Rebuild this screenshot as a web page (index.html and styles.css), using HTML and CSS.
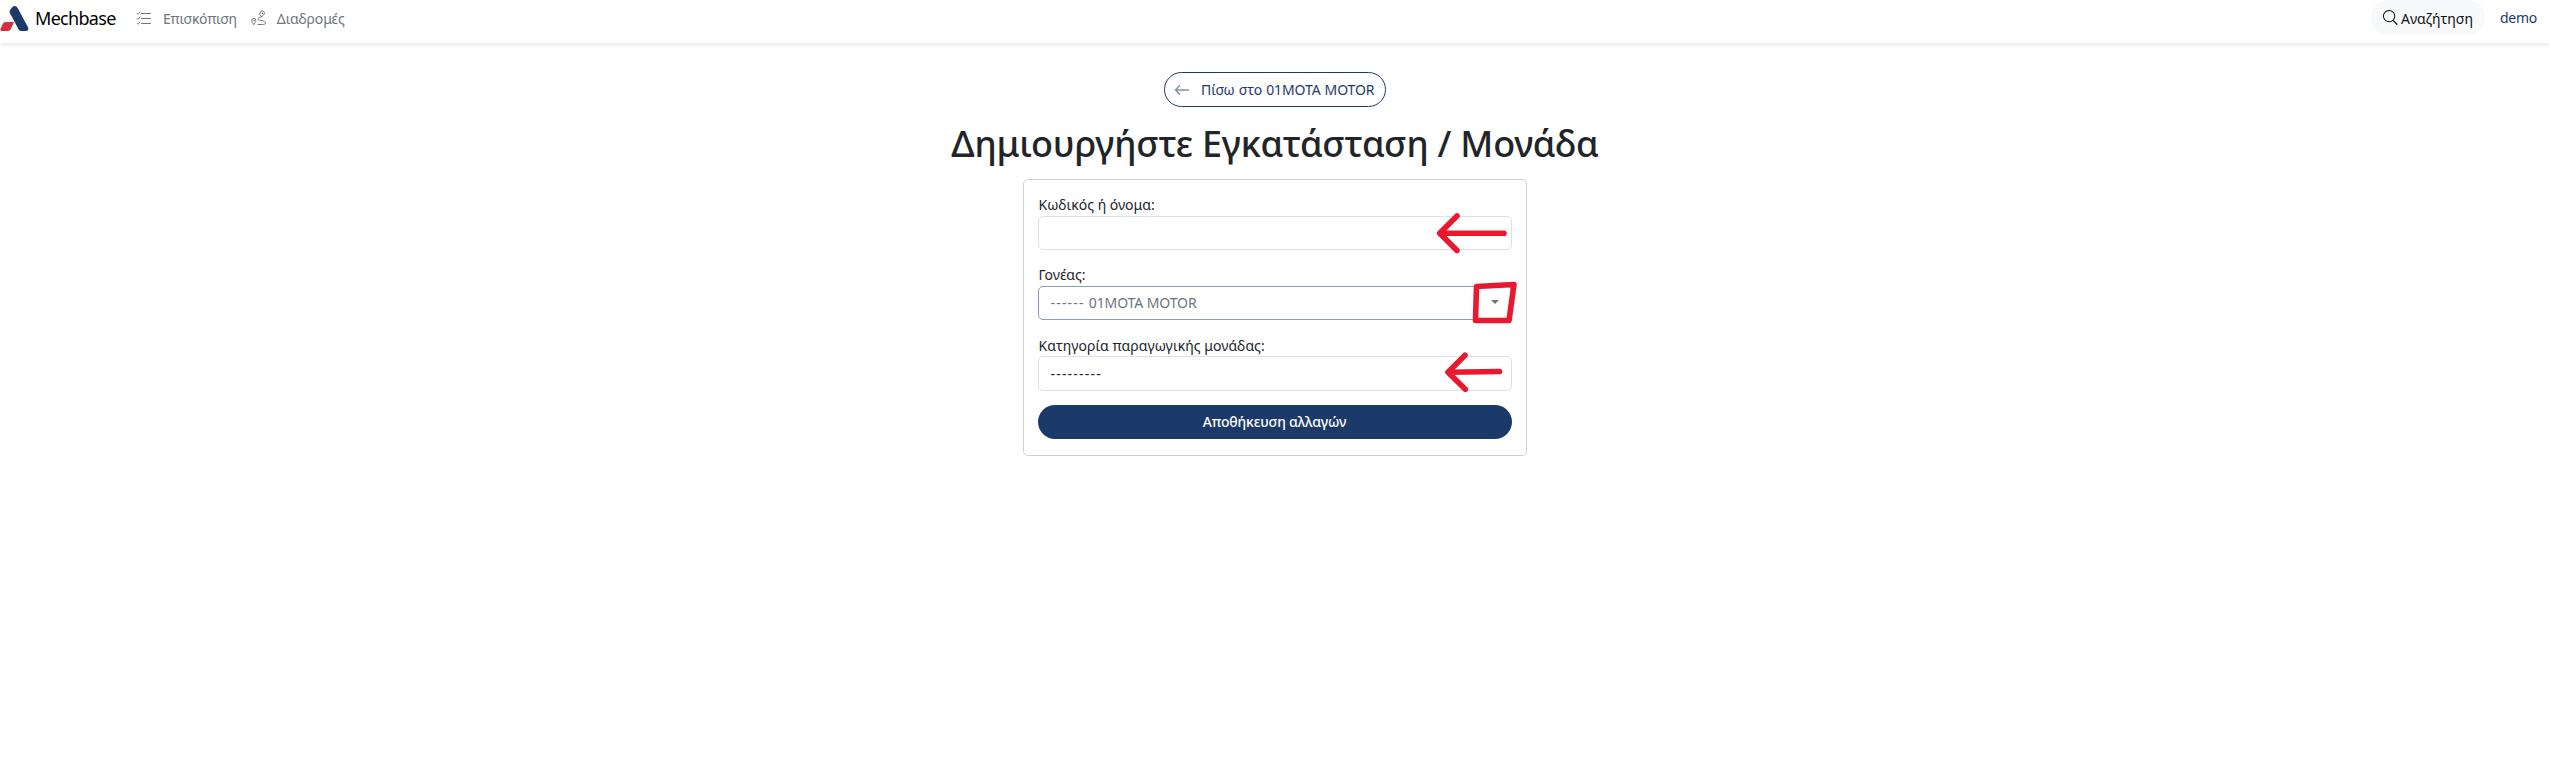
FILE: index.html
```html
<!DOCTYPE html>
<html lang="el">
<head>
<meta charset="utf-8">
<title>Mechbase</title>
<link rel="stylesheet" href="styles.css">
</head>
<body>
<header class="navbar">
  <a class="brand">
    <svg class="logo" width="29" height="32" viewBox="0 0 29 32"><path fill="#d22f3f" d="M5.5 22H14l-3.200 7.200Q10 31 8 31H2.200Q-.3 31 .6 28.600L3 23.600Q3.700 22 5.500 22Z"/><path fill="#1c3a69" d="M10 10.500Q12.300 6 14.600 6q2 0 3.200 2.300L28 27.300Q29.300 31 26 31h-5q-1.700 0-2.500-1.700L9.600 12.500Q9.200 11.500 10 10.500Z"/></svg>
    <span class="brand-name">Mechbase</span>
  </a>
  <nav class="links">
    <a class="link link-overview"><svg width="16" height="16" viewBox="0 0 16 16" fill="none" stroke="currentColor" stroke-linecap="round" stroke-linejoin="round"><path d="M5.500 3.500h9M5.500 8.500h9M5.500 13.500h9"/><path d="M1 3.300l1 1 2-2.300M1 8.300l1 1 2-2.300M1 13.300l1 1 2-2.300" stroke-width=".9"/></svg><span>Επισκόπιση</span></a>
    <a class="link link-routes"><svg width="16" height="16" viewBox="0 0 16 16" fill="none" stroke="currentColor" stroke-linecap="round" stroke-linejoin="round"><path d="M9.600 6.200C8.600 4.600 8.600 3.400 9.200 2.200 10.200.4 13 .6 13.400 2.600c.3 1.600-1 3.200-3.800 4.400-1.800.8-2.700 1.500-2.500 2.300.3 1.200 7.400 1.200 7.400 3.600 0 1.200-1.200 1.600-3 1.600H7M2.800 14.300C1.400 12.700.8 11.600.8 10.400a2 2 0 0 1 4 0c0 1.200-.6 2.300-2 3.900Z"/><circle cx="11.300" cy="3.200" r=".3"/><circle cx="2.800" cy="10.400" r=".2"/></svg><span>Διαδρομές</span></a>
  </nav>
  <div class="account">
    <button class="search"><svg width="15" height="15" viewBox="0 0 16 16" fill="currentColor"><path d="M11.742 10.344a6.500 6.500 0 1 0-1.397 1.398h-.001q.044.06.098.115l3.850 3.850a.7.7 0 0 0 1-1l-3.850-3.850a1 1 0 0 0-.115-.1zM12 6.500a5.500 5.500 0 1 1-11 0 5.500 5.500 0 0 1 11 0"/></svg><span>Αναζήτηση</span></button>
    <a class="user">demo</a>
  </div>
</header>
<main class="page">
  <a class="back"><svg width="16" height="16" viewBox="0 0 16 16" fill="none" stroke="currentColor" stroke-width="1.500" stroke-linecap="round" stroke-linejoin="round"><path d="M14.500 8H1.500M5.500 3.800 1.500 8l4 4.200"/></svg><span>Πίσω στο 01MOTA MOTOR</span></a>
  <h1 class="title">Δημιουργήστε Εγκατάσταση / Μονάδα</h1>
  <form class="card">
    <div class="field"><label class="label label-name">Κωδικός ή όνομα:</label><div class="control"></div></div>
    <div class="field"><label class="label label-parent">Γονέας:</label><div class="control control-parent"><span class="dashes">------</span><span class="parent-name">01MOTA MOTOR</span><i class="caret"></i></div></div>
    <div class="field"><label class="label label-category">Κατηγορία παραγωγικής μονάδας:</label><div class="control control-category"><span class="dashes">---------</span></div></div>
    <button class="save" type="button">Αποθήκευση αλλαγών</button>
    <svg class="marks" width="92" height="190" viewBox="1432 207 92 190"><g fill="none" stroke="#e8192f" stroke-width="5.600" stroke-linecap="round" stroke-linejoin="round"><path d="M1504 233.300H1440M1457 216l-17.300 17.300L1457 250.500"/><path d="M1476.500 286.500 1514 284.500 1509 320.500H1475.500Z"/><path d="M1499.500 371.500 1448 372.300M1465 355.200l-17 17 17.300 17"/></g></svg>
  </form>
</main>
</body>
</html>
```
FILE: styles.css
```css
* { box-sizing: border-box; }
body { margin: 0; background: #fff; color: #212529; font: 14px/21px "Noto Sans", "Open Sans", sans-serif; }
button { font: inherit; border: 0; }
svg { display: block; flex: none; }
.navbar { height: 43px; display: flex; align-items: flex-start; box-shadow: 0 2px 4px rgba(0, 0, 0, .09); }
.brand { display: flex; width: 136px; color: #000; }
.brand-name { margin-left: 6px; font-size: 18px; line-height: 37px; letter-spacing: -.7px; }
.links { display: flex; height: 36px; align-items: center; color: #6c757d; }
.link { display: flex; align-items: center; }
.link span { margin-left: 11px; letter-spacing: -.25px; }
.link-routes { margin-left: 14px; }
.link-routes span { margin-left: 10px; letter-spacing: -.1px; }
.account { display: flex; align-items: flex-start; margin-left: auto; }
.search { display: flex; align-items: center; width: 114px; height: 35px; padding: 1px 0 0 12px; border-radius: 18px; background: #f8f9fa; color: #111; white-space: nowrap; }
.search svg { margin-top: -2px; }
.search span { margin-left: 3px; }
.user { width: 50px; margin-left: 15px; line-height: 36px; letter-spacing: -.3px; color: #1c3a69; }
.page { display: flex; flex-direction: column; align-items: center; padding-top: 29px; }
.back { display: flex; align-items: center; width: 222px; height: 35px; padding-left: 9px; border: 1px solid #1c3a69; border-radius: 18px; color: #1c3a69; white-space: nowrap; }
.back svg { opacity: .55; }
.back span { margin-left: 11px; letter-spacing: -.1px; word-spacing: .5px; }
.title { margin: 11px 0 10px; font-size: 36px; line-height: 51px; font-weight: 500; letter-spacing: -.22px; white-space: nowrap; }
.card { position: relative; left: -.5px; width: 504px; height: 277px; padding: 14px; border: 1px solid #ced0d2; border-radius: 5px; }
.field { height: 70px; }
.field + .field + .field { height: 71px; }
.label { display: block; height: 22px; padding-left: 1px; }
.label-category { padding-top: 1px; letter-spacing: .07px; }
.control { display: flex; align-items: center; height: 34px; padding: 0 12px; border: 1px solid #dee0e4; border-radius: 5px; }
.control-parent { padding-bottom: 1px; border-color: #8d9bb4; color: #6c757d; }
.control-category { height: 35px; }
.dashes { letter-spacing: 1.2px; }
.parent-name { margin-left: 4px; letter-spacing: -.1px; }
.caret { margin: 0 0 1px auto; border: 4px solid transparent; border-top-color: #6c757d; border-bottom: 0; }
.save { display: block; width: 474px; height: 34px; padding-bottom: 2px; border-radius: 17px; background: #1c3a69; color: #fff; font-weight: 500; letter-spacing: -.18px; }
.marks { position: absolute; left: 408px; top: 27px; }
```
